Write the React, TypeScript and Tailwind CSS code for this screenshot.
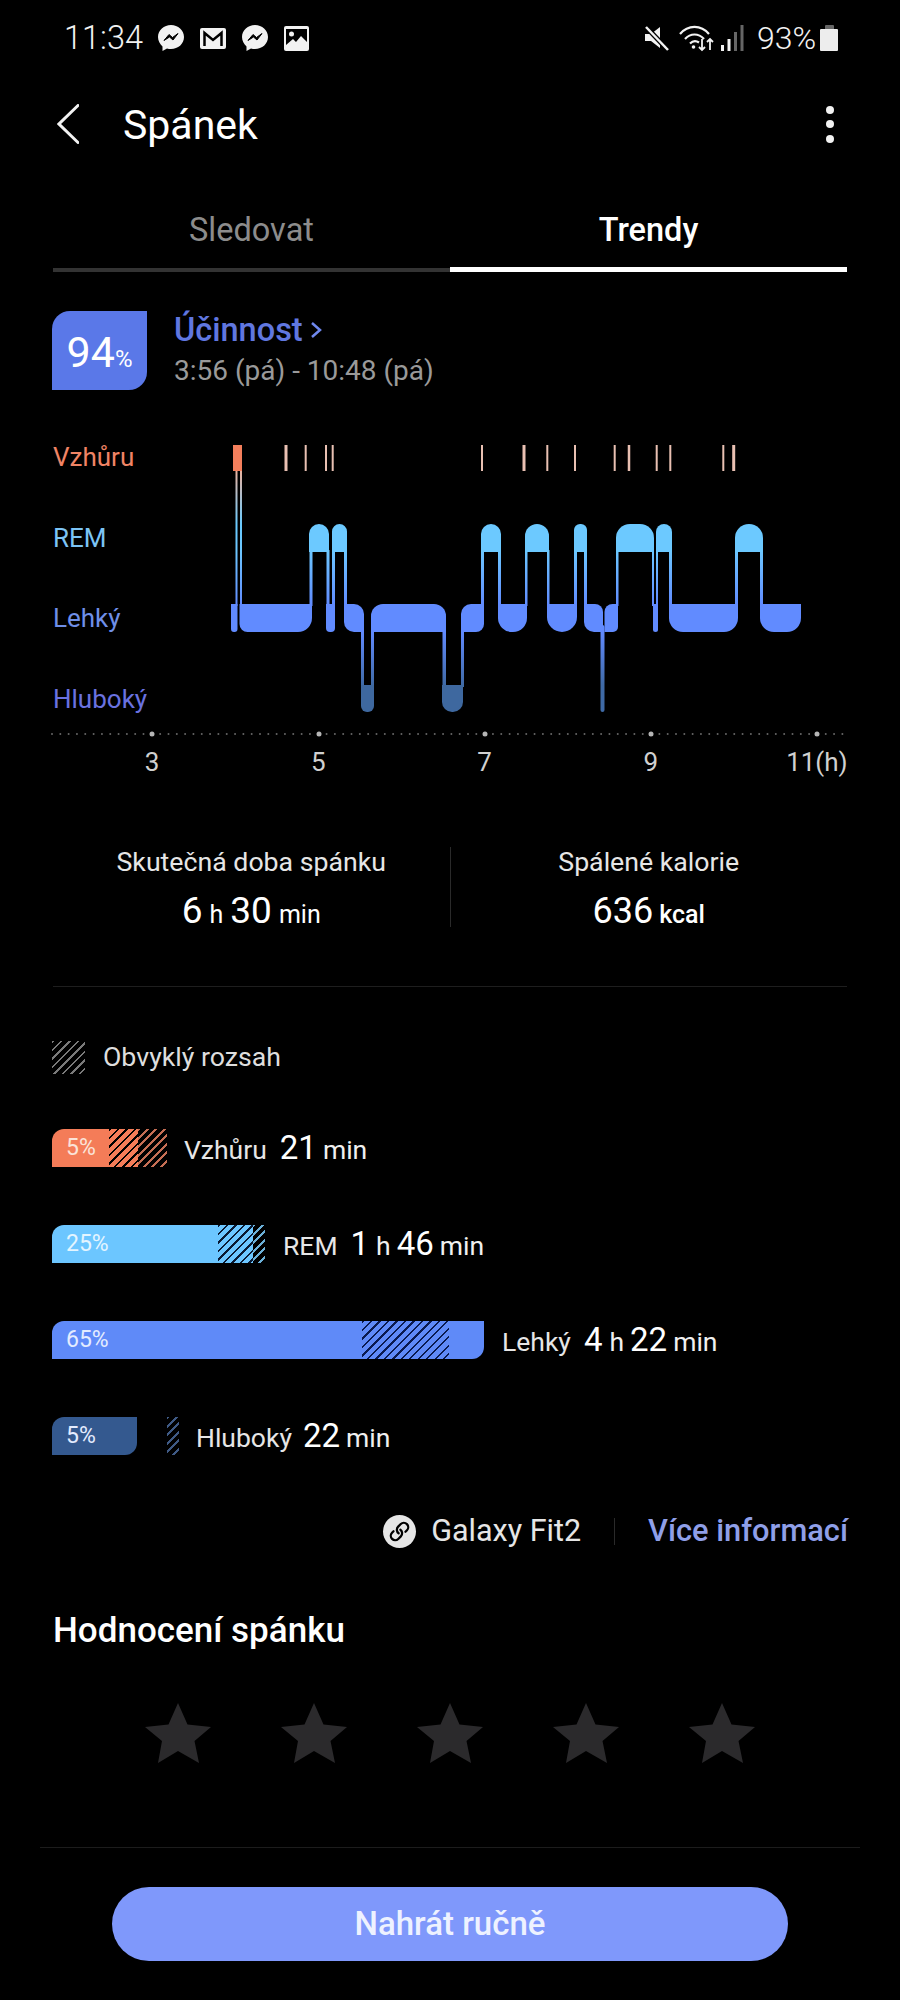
import { Link } from 'lucide-react'

type Corners = [number, number, number, number]

// tl, tr, br, bl radii
function seg(x1: number, x2: number, y1: number, y2: number, [tl, tr, br, bl]: Corners) {
  return (
    `M${x1 + tl} ${y1}H${x2 - tr}A${tr} ${tr} 0 0 1 ${x2} ${y1 + tr}V${y2 - br}A${br} ${br} 0 0 1 ${x2 - br} ${y2}` +
    `H${x1 + bl}A${bl} ${bl} 0 0 1 ${x1} ${y2 - bl}V${y1 + tl}A${tl} ${tl} 0 0 1 ${x1 + tl} ${y1}Z`
  )
}

const REM: [number, number, number][] = [
  [309, 329, 10],
  [332, 347, 7.5],
  [481, 501, 10],
  [525, 549, 12],
  [574, 587, 6],
  [616, 654, 14],
  [656, 672, 8],
  [735, 763, 14],
]

const LIGHT: [number, number, Corners][] = [
  [231, 237.5, [0, 0, 3, 3]],
  [239.5, 312, [0, 0, 14, 8]],
  [326, 335, [0, 0, 4, 4]],
  [344, 364, [0, 10, 0, 10]],
  [371, 446, [12, 12, 0, 0]],
  [461, 484, [10, 0, 8, 0]],
  [498, 527, [0, 0, 14, 14]],
  [547, 577, [0, 0, 15, 15]],
  [584, 603, [0, 8, 0, 10]],
  [604.5, 618, [8, 0, 5, 0]],
  [653, 658, [0, 0, 2.5, 2.5]],
  [669, 738, [0, 0, 14, 14]],
  [760, 801, [0, 0, 14, 14]],
]

const DEEP: [number, number, number][] = [
  [361, 374, 6],
  [442, 463, 10],
]

// x, width, top, bottom
const LINKS: [number, number, number, number][] = [
  [235.5, 2, 471, 606],
  [240, 2, 471, 606],
  [309.5, 3, 550, 606],
  [326.5, 3, 550, 606],
  [332, 3, 550, 606],
  [344, 3, 550, 606],
  [361, 3, 630, 687],
  [371, 3, 630, 687],
  [442.5, 3.5, 630, 687],
  [461, 3, 630, 687],
  [481, 3, 550, 606],
  [498, 3, 550, 606],
  [525, 2.5, 550, 606],
  [547, 2.5, 550, 606],
  [574, 3, 550, 606],
  [584, 3, 550, 606],
  [616, 2.5, 550, 606],
  [652, 2, 550, 606],
  [656, 2, 550, 606],
  [669, 3, 550, 606],
  [735, 3, 550, 606],
  [760, 3, 550, 606],
]

const AWAKE_TICKS: [number, number][] = [
  [286, 3],
  [305.7, 2],
  [326, 2],
  [332.7, 2],
  [482, 2],
  [524, 3],
  [547.3, 2],
  [575, 2],
  [614.7, 2],
  [629, 2.5],
  [656.7, 2],
  [670.3, 2],
  [723.3, 2],
  [733.7, 3],
]

function Hypnogram() {
  return (
    <svg viewBox="223 437 625 293" className="h-[293px] w-[625px] shrink-0">
      <defs>
        <linearGradient id="stage" gradientUnits="userSpaceOnUse" x1="0" y1="445" x2="0" y2="712">
          <stop offset="0.1" stopColor="#e8b3a0" />
          <stop offset="0.3" stopColor="#68caff" />
          <stop offset="0.4" stopColor="#6cc6ff" />
          <stop offset="0.595" stopColor="#618cff" />
          <stop offset="0.7" stopColor="#618aff" />
          <stop offset="0.9" stopColor="#3f6aa6" />
        </linearGradient>
      </defs>
      <rect x="233" y="445" width="9" height="26" fill="#f47f5c" />
      {AWAKE_TICKS.map(([x, w]) => (
        <rect key={x} x={x - w / 2} y="445" width={w} height="26" fill="#e9c0b2" />
      ))}
      {LINKS.map(([x, w, y1, y2]) => (
        <rect key={x} x={x} y={y1} width={w} height={y2 - y1} fill="url(#stage)" />
      ))}
      {REM.map(([x1, x2, r]) => (
        <path key={x1} d={seg(x1, x2, 524, 552, [r, r, 0, 0])} fill="#6cc9ff" />
      ))}
      {LIGHT.map(([x1, x2, c]) => (
        <path key={x1} d={seg(x1, x2, 604, 632, c)} fill="#618bff" />
      ))}
      {DEEP.map(([x1, x2, r]) => (
        <path key={x1} d={seg(x1, x2, 685, 712, [0, 0, r, r])} fill="#3e689f" />
      ))}
      <rect x="600.5" y="625" width="4" height="87" rx="2" fill="url(#stage)" />
    </svg>
  )
}

function AxisLine() {
  const ticks = [152, 319, 485, 651, 817]
  const dots = Array.from({ length: 96 }, (_, i) => 52 + i * 8.32)
  return (
    <svg viewBox="0 730 900 8" className="h-[8px] w-[900px]">
      {dots.map((x) => (
        <circle key={x} cx={x} cy="734" r="1" fill="#666" />
      ))}
      {ticks.map((x) => (
        <circle key={x} cx={x} cy="734" r="2.5" fill="#b5b5b5" />
      ))}
    </svg>
  )
}

function Messenger() {
  return (
    <svg viewBox="0 0 26 28" className="h-[28px] w-[26px]">
      <path d="M13 1C6 1 0 6 0 13c0 4 2 7 4.500 9.500V27l4.500-2.500c1.300.4 2.600.5 4 .5 7 0 13-5 13-12S20 1 13 1z" fill="#f2f2f2" />
      <path d="M6 16.500l5-6 3.500 3 5.500-4-5 6.500-3.500-3z" fill="#000" stroke="#000" strokeWidth="1" />
    </svg>
  )
}

function StatusBar() {
  return (
    <div className="flex h-[76px] items-center justify-between pl-[64px] pr-[62px] text-[#f2f2f2]">
      <div className="flex items-center">
        <span className="w-[79px] text-[32.500px] font-light">11:34</span>
        <div className="ml-[15px] flex items-center gap-[16px]">
          <Messenger />
          <svg viewBox="0 0 26 21" className="h-[21px] w-[26px]">
            <rect width="26" height="21" rx="2" fill="#f2f2f2" />
            <path d="M4.500 18V5l8.500 7 8.500-7v13" fill="none" stroke="#000" strokeWidth="2.500" />
          </svg>
          <Messenger />
          <svg viewBox="0 0 25 25" className="h-[25px] w-[25px]">
            <rect width="25" height="25" rx="2" fill="#f2f2f2" />
            <path d="M2 3h21v13l-6-6-5 6-3-3-7 6z" fill="#000" />
            <circle cx="7.500" cy="8" r="2.500" fill="#f2f2f2" />
          </svg>
        </div>
      </div>
      <div className="flex items-center">
        <svg viewBox="0 0 24 25" className="h-[25px] w-[24px]">
          <path d="M0 8h6l9-7v21l-9-7H0z" fill="#f2f2f2" />
          <path d="M1 1l22 23" stroke="#000" strokeWidth="5" />
          <path d="M1 1l22 23" stroke="#f2f2f2" strokeWidth="2.500" />
        </svg>
        <svg viewBox="0 0 36 27" className="ml-[10px] h-[27px] w-[36px]" fill="none" stroke="#f2f2f2" strokeWidth="2.200">
          <path d="M1 9c8-9.500 21-9.500 29 0" />
          <path d="M6 14c5.500-6 13.500-6 19 0" />
          <path d="M11 18.500c3-3 6-3 9-1" />
          <circle cx="14.500" cy="22" r="1.800" fill="#f2f2f2" stroke="none" />
          <path d="M23 14v11m-3-3l3 3 3-3M31 25V14m-3 3l3-3 3 3" strokeWidth="1.800" />
        </svg>
        <svg viewBox="0 0 23 26" className="ml-[6px] h-[26px] w-[23px]">
          <rect x="0" y="20" width="3" height="6" fill="#f2f2f2" />
          <rect x="6.500" y="14" width="3" height="12" fill="#f2f2f2" />
          <rect x="13" y="7" width="3" height="19" fill="#666" />
          <rect x="19.500" y="0" width="3" height="26" fill="#666" />
        </svg>
        <span className="ml-[13px] w-[60px] text-[32px] font-light">93%</span>
        <div className="ml-[3px] flex flex-col items-center">
          <div className="h-[4px] w-[9px] rounded-t-[1px] bg-[#666]" />
          <div className="h-[22px] w-[18px] rounded-[1px] bg-[#ededed]" />
        </div>
      </div>
    </div>
  )
}

const textPlain = 'text-[26.500px] text-[#e6e6e6]'
const num = 'text-[33px] text-white'
const unit = 'text-[26.500px] text-[#f0f0f0]'

export default function App() {
  return (
    <div className="h-[2000px] w-[900px] overflow-hidden bg-black font-['Roboto',sans-serif]">
      <StatusBar />

      <div className="flex h-[96px] items-center justify-between pl-[57px] pr-[66px]">
        <div className="flex items-center">
          <svg viewBox="0 0 22 40" className="h-[40px] w-[22px]" fill="none" stroke="#f2f2f2" strokeWidth="3" strokeLinecap="round">
            <path d="M21 1.500L2 20l19 18.500" />
          </svg>
          <h1 className="ml-[44px] pt-[2px] text-[41px] leading-[48px] text-white">Spánek</h1>
        </div>
        <div className="flex flex-col gap-[6.500px]">
          <div className="h-[8px] w-[8px] rounded-full bg-[#f2f2f2]" />
          <div className="h-[8px] w-[8px] rounded-full bg-[#f2f2f2]" />
          <div className="h-[8px] w-[8px] rounded-full bg-[#f2f2f2]" />
        </div>
      </div>

      <div className="mx-[53px] flex">
        <div className="h-[100px] flex-1 border-b-[4px] border-[#333] pt-[38px] text-center text-[32.500px] leading-[40px] text-[#8c8c8c]">Sledovat</div>
        <div className="h-[100px] flex-1 border-b-[5px] border-white pt-[38px] text-center text-[32.500px] font-medium leading-[40px] text-white">Trendy</div>
      </div>

      <div className="ml-[52px] mt-[39px] flex">
        <div className="flex h-[79px] w-[95px] items-baseline justify-center rounded-tl-[18px] rounded-br-[18px] bg-[#5a78e8] pt-[16px] text-white">
          <span className="text-[43px] leading-[50px]">94</span>
          <span className="text-[24px] leading-[50px]">%</span>
        </div>
        <div className="ml-[27px] flex flex-col">
          <div className="flex h-[38px] items-center text-[32.500px] font-medium text-[#6077e0]">
            Účinnost
            <svg viewBox="0 0 12 16" className="ml-[7px] h-[16px] w-[12px]" fill="none" stroke="#6f88ee" strokeWidth="2.500">
              <path d="M2 1l8 7-8 7" />
            </svg>
          </div>
          <div className="mt-[3px] text-[28px] leading-[38px] text-[#9a9a9a]">3:56 (pá) - 10:48 (pá)</div>
        </div>
      </div>

      <div className="mt-[47px] flex">
        <div className="ml-[53px] flex w-[170px] flex-col gap-[40.500px] text-[26px] leading-[40px]">
          <div className="text-[#f08465]">Vzhůru</div>
          <div className="text-[#7cc4f5]">REM</div>
          <div className="text-[#6f8fe8]">Lehký</div>
          <div className="text-[#6a72e0]">Hluboký</div>
        </div>
        <Hypnogram />
      </div>

      <AxisLine />
      <div className="mt-[9px] grid w-[831px] translate-x-[69px] grid-cols-5 text-center text-[26px] leading-[30px] text-[#d0d0d0]">
        <span>3</span>
        <span>5</span>
        <span>7</span>
        <span>9</span>
        <span>11(h)</span>
      </div>

      <div className="mx-[53px] mt-[70px] flex h-[80px] items-start">
        <div className="flex flex-1 flex-col items-center">
          <div className="text-[26.700px] leading-[30px] text-[#e6e6e6]">Skutečná doba spánku</div>
          <div className="mt-[14px] flex h-[40px] items-baseline gap-[7px] text-white">
            <span className="text-[37px] leading-[40px]">6</span>
            <span className="text-[25px]">h</span>
            <span className="text-[37px] leading-[40px]">30</span>
            <span className="text-[25px]">min</span>
          </div>
        </div>
        <div className="h-[80px] w-px bg-[#2a2a2a]" />
        <div className="flex flex-1 flex-col items-center">
          <div className="text-[26.700px] leading-[30px] text-[#e6e6e6]">Spálené kalorie</div>
          <div className="mt-[14px] flex h-[40px] items-baseline gap-[6px] text-white">
            <span className="text-[36px] leading-[40px]">636</span>
            <span className="text-[25px] font-medium">kcal</span>
          </div>
        </div>
      </div>

      <div className="mx-[53px] mt-[59px] h-px bg-[#1e1e1e]" />

      <div className="ml-[52px] mt-[54px] flex h-[33px] items-center">
        <div className="h-[33px] w-[33px] bg-[repeating-linear-gradient(135deg,#7a7a7a_0,#7a7a7a_1.5px,transparent_1.5px,transparent_6px)]" />
        <span className="ml-[18px] text-[26.700px] text-[#dedede]">Obvyklý rozsah</span>
      </div>

      <div className="ml-[52px] mt-[55px] flex flex-col gap-[58px]">
        <div className="flex h-[38px] items-center">
          <div className="flex h-[38px] w-[115px] overflow-hidden rounded-tl-[12px]">
            <div className="flex w-[57px] items-center bg-[#f47c58] pl-[14px] text-[23px] text-[#fbe3d8]">5%</div>
            <div className="w-[29px] bg-[#f47c58] bg-[repeating-linear-gradient(135deg,#000_0,#000_1.5px,transparent_1.5px,transparent_6px)]" />
            <div className="w-[29px] bg-[repeating-linear-gradient(135deg,#c56e54_0,#c56e54_2px,#000_2px,#000_6px)]" />
          </div>
          <div className="ml-[17px] flex items-baseline">
            <span className={textPlain}>Vzhůru</span>
            <span className={`ml-[13px] ${num}`}>21</span>
            <span className={`ml-[6px] ${unit}`}>min</span>
          </div>
        </div>

        <div className="flex h-[38px] items-center">
          <div className="flex h-[38px] w-[213px] overflow-hidden rounded-tl-[12px]">
            <div className="flex w-[166px] items-center bg-[#6cc6ff] pl-[14px] text-[23px] text-[#e4f5ff]">25%</div>
            <div className="w-[35px] bg-[#6cc6ff] bg-[repeating-linear-gradient(135deg,#0a1a33_0,#0a1a33_1.5px,transparent_1.5px,transparent_6px)]" />
            <div className="w-[12px] bg-[repeating-linear-gradient(135deg,#6cb0d8_0,#6cb0d8_2px,#000_2px,#000_6px)]" />
          </div>
          <div className="ml-[18px] flex items-baseline">
            <span className={textPlain}>REM</span>
            <span className={`ml-[13px] ${num}`}>1</span>
            <span className={`ml-[7px] ${unit}`}>h</span>
            <span className={`ml-[6px] ${num}`}>46</span>
            <span className={`ml-[6px] ${unit}`}>min</span>
          </div>
        </div>

        <div className="flex h-[38px] items-center">
          <div className="flex h-[38px] w-[432px] overflow-hidden rounded-tl-[12px] rounded-br-[12px] bg-[#5f8af8]">
            <div className="flex w-[310px] items-center pl-[14px] text-[23px] text-[#e4ecff]">65%</div>
            <div className="w-[87px] bg-[repeating-linear-gradient(135deg,#0a1a50_0,#0a1a50_1.5px,transparent_1.5px,transparent_6px)]" />
          </div>
          <div className="ml-[18px] flex items-baseline">
            <span className={textPlain}>Lehký</span>
            <span className={`ml-[13px] ${num}`}>4</span>
            <span className={`ml-[7px] ${unit}`}>h</span>
            <span className={`ml-[6px] ${num}`}>22</span>
            <span className={`ml-[6px] ${unit}`}>min</span>
          </div>
        </div>

        <div className="flex h-[38px] items-center">
          <div className="flex h-[38px] w-[85px] items-center rounded-tl-[12px] rounded-br-[12px] bg-[#34598f] pl-[14px] text-[23px] text-[#e4ecff]">5%</div>
          <div className="ml-[30px] h-[38px] w-[12px] bg-[repeating-linear-gradient(135deg,#3f5a85_0,#3f5a85_2px,#000_2px,#000_6px)]" />
          <div className="ml-[17px] flex items-baseline">
            <span className={textPlain}>Hluboký</span>
            <span className={`ml-[11px] ${num}`}>22</span>
            <span className={`ml-[6px] ${unit}`}>min</span>
          </div>
        </div>
      </div>

      <div className="mr-[52px] mt-[59px] flex h-[34px] items-center justify-end">
        <div className="flex h-[33px] w-[33px] items-center justify-center rounded-full bg-[#e6e6e6]">
          <Link size={21} strokeWidth={2.6} color="#000" className="-scale-x-100 rotate-90" />
        </div>
        <span className="ml-[15px] text-[30.500px] text-[#e6e6e6]">Galaxy Fit2</span>
        <div className="ml-[33px] h-[27px] w-px bg-[#2a2a2a]" />
        <span className="ml-[33px] text-[30.800px] font-medium text-[#8f9fe8]">Více informací</span>
      </div>

      <h2 className="ml-[53px] mt-[63px] text-[35px] font-medium leading-[40px] text-white">Hodnocení spánku</h2>

      <div className="mt-[52px] flex justify-center gap-[70px]">
        {[0, 1, 2, 3, 4].map((i) => (
          <svg key={i} viewBox="0 0 66 60" className="h-[60px] w-[66px]">
            <path d="M33 0l9.500 21.500L66 24 49.500 38 54 60 33 48 13 60l4-22L0 24l23.500-2.500z" fill="#2b2a2c" />
          </svg>
        ))}
      </div>

      <div className="mx-[40px] mt-[84px] h-px bg-[#1c1c1c]" />

      <button className="mx-auto mt-[39px] flex h-[74px] w-[676px] items-center justify-center rounded-full bg-[#7f98fb] text-[33px] font-medium text-[#eef2ff]">
        Nahrát ručně
      </button>
    </div>
  )
}
